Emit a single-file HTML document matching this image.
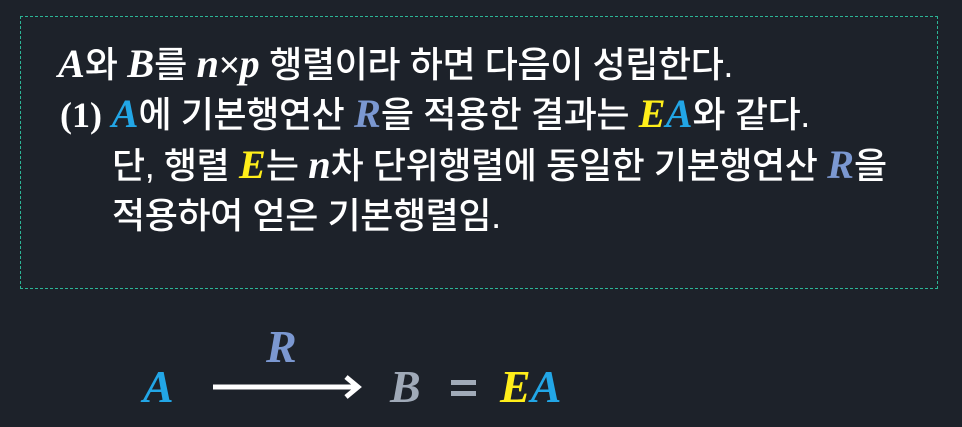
<!DOCTYPE html>
<html><head><meta charset="utf-8"><style>
body{margin:0;width:962px;height:427px;background:#1d222a;overflow:hidden;position:relative;font-family:"Liberation Sans","Noto Sans CJK KR",sans-serif;color:#fff}
.box{position:absolute;left:20px;top:16px;width:916px;height:271px;border:1px dashed #2bb596;}
.l{position:absolute;font-size:36px;white-space:nowrap;letter-spacing:-0.4px;line-height:40px;font-weight:500}
.m{font-family:"Liberation Serif",serif;font-style:italic;font-weight:bold;letter-spacing:0;font-size:1.12em;line-height:0}
.b{color:#22a6e6}.r{color:#7b98d1}.y{color:#ffee1a}.g{color:#a0aab8}
.d{position:absolute;font-family:"Liberation Serif",serif;font-style:italic;font-weight:bold;font-size:46px;line-height:46px}
</style></head><body>
<div class="box"></div>
<div class="l" style="left:58px;top:45px"><span class="m">A</span>와 <span class="m">B</span>를 <span class="m">n</span>×<span class="m">p</span> 행렬이라 하면 다음이 성립한다.</div>
<div class="l" style="left:60px;top:95px"><span style="font-family:'Liberation Serif',serif;font-weight:bold;letter-spacing:0">(1)</span> <span class="m b">A</span>에 기본행연산 <span class="m r">R</span>을 적용한 결과는 <span class="m y">E</span><span class="m b">A</span>와 같다.</div>
<div class="l" style="left:112px;top:146px">단, 행렬 <span class="m y">E</span>는 <span class="m">n</span>차 단위행렬에 동일한 기본행연산 <span class="m r">R</span>을</div>
<div class="l" style="left:112px;top:196px">적용하여 얻은 기본행렬임.</div>
<div class="d b" style="left:143px;top:364px">A</div>
<div class="d r" style="left:266px;top:324px">R</div>
<svg style="position:absolute;left:210px;top:374px" width="155" height="26"><path d="M3 13H148M136 3L148 13L136 23" stroke="#fff" stroke-width="5" fill="none"/></svg>
<div class="d g" style="left:390px;top:364px">B</div>
<div style="position:absolute;left:451px;top:380px;width:25px;height:5px;background:#a0aab8"></div>
<div style="position:absolute;left:451px;top:391px;width:25px;height:5px;background:#a0aab8"></div>
<div class="d" style="left:500px;top:364px"><span class="y">E</span><span class="b">A</span></div>
</body></html>
